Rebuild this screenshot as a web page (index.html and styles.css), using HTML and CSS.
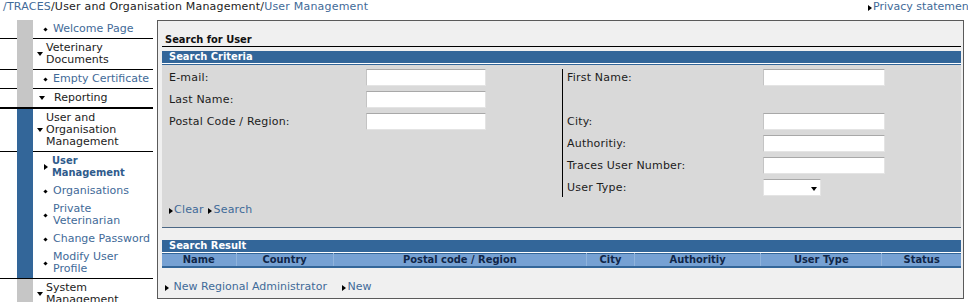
FILE: index.html
```html
<!DOCTYPE html>
<html lang="en">
<head>
<meta charset="utf-8"/>
<title>TRACES - User Management</title>
<link rel="stylesheet" href="styles.css">
</head>
<body>

<div class="topbar">
    <div class="crumbs"><a href="#">/TRACES</a>/User and Organisation Management/<a href="#">User Management</a></div>
    <div class="privacy"><span class="tri"></span><a href="#">Privacy statement</a></div>
</div>

<div class="layout">
    <!-- left navigation -->
    <nav class="menu">
        <div class="item"><span class="gut"></span><span class="bar"></span>
            <div class="cell sub"><i class="dot"></i><a href="#">Welcome Page</a></div></div>
        <div class="item"><span class="gut"></span><span class="bar"></span>
            <div class="cell"><i class="down"></i><span>Veterinary<br>Documents</span></div></div>
        <div class="item"><span class="gut"></span><span class="bar"></span>
            <div class="cell sub"><i class="dot"></i><a href="#">Empty Certificate</a></div></div>
        <div class="item last"><span class="gut"></span><span class="bar"></span>
            <div class="cell report"><i class="down"></i><span>Reporting</span></div></div>
        <div class="rule thick"></div>

        <div class="item blue"><span class="gut"></span><span class="bar"></span>
            <div class="cell"><i class="down"></i><span>User and<br>Organisation<br>Management</span></div></div>
        <div class="item blue plain"><span class="gut"></span><span class="bar"></span>
            <div class="cell sub current"><i class="tri"></i><a href="#">User<br>Management</a></div></div>
        <div class="item blue plain"><span class="gut"></span><span class="bar"></span>
            <div class="cell sub"><i class="dot"></i><a href="#">Organisations</a></div></div>
        <div class="item blue plain"><span class="gut"></span><span class="bar"></span>
            <div class="cell sub"><i class="dot"></i><a href="#">Private<br>Veterinarian</a></div></div>
        <div class="item blue plain"><span class="gut"></span><span class="bar"></span>
            <div class="cell sub"><i class="dot"></i><a href="#">Change Password</a></div></div>
        <div class="item blue plain"><span class="gut"></span><span class="bar"></span>
            <div class="cell sub"><i class="dot"></i><a href="#">Modify User<br>Profile</a></div></div>
        <div class="rule"></div>

        <div class="item plain"><span class="gut"></span><span class="bar"></span>
            <div class="cell"><i class="down"></i><span>System<br>Management</span></div></div>
    </nav>

    <main class="panel">
        <h1 class="title">Search for User</h1>

        <div class="band">Search Criteria</div>
        <div class="criteria">
            <div class="fields">
                <div class="col">
                    <div class="row"><label>E-mail:</label><input type="text"></div>
                    <div class="row"><label>Last Name:</label><input type="text"></div>
                    <div class="row"><label>Postal Code / Region:</label><input type="text"></div>
                </div>
                <div class="col right">
                    <div class="row"><label>First Name:</label><input type="text"></div>
                    <div class="row"></div>
                    <div class="row"><label>City:</label><input type="text"></div>
                    <div class="row"><label>Authoritiy:</label><input type="text"></div>
                    <div class="row"><label>Traces User Number:</label><input type="text"></div>
                    <div class="row"><label>User Type:</label><div class="select"><i class="down"></i></div></div>
                </div>
            </div>
            <div class="actions">
                <a href="#"><span class="tri"></span>Clear</a>
                <a href="#"><span class="tri"></span>Search</a>
            </div>
        </div>

        <div class="band result">Search Result</div>
        <table class="results">
            <colgroup>
                <col class="c-name"><col class="c-country"><col class="c-postal"><col class="c-city">
                <col class="c-auth"><col class="c-type"><col class="c-status">
            </colgroup>
            <thead>
                <tr>
                    <th>Name</th><th>Country</th><th>Postal code / Region</th><th>City</th>
                    <th>Authoritiy</th><th>User Type</th><th>Status</th>
                </tr>
            </thead>
        </table>

        <div class="links">
            <a href="#"><span class="tri"></span> New Regional Administrator</a>
            <a href="#" class="new"><span class="tri"></span>New</a>
        </div>
    </main>
</div>

</body>
</html>
```

FILE: styles.css
```css
body {
    margin: 0;
    width: 968px;
    overflow: hidden;
    font-family: "DejaVu Sans", Verdana, sans-serif;
    font-size: 11px;
    letter-spacing: 0.2px;
    color: #1c1c1c;
    background: #fff;
}
a {
    color: #3f6a98;
    text-decoration: none;
}
/* bold captions are narrower in the original */
.title,
.band,
.results th,
.cell.current a {
    font-family: "DejaVu Sans Condensed", "DejaVu Sans", Verdana, sans-serif;
    font-stretch: condensed;
    letter-spacing: 0;
}

/* little glyphs */
.tri {
    display: inline-block;
    width: 0;
    height: 0;
    border-left: 4px solid #000;
    border-top: 3.5px solid transparent;
    border-bottom: 3.5px solid transparent;
    margin-right: 1px;
    vertical-align: -1px;
}
.down {
    display: inline-block;
    width: 0;
    height: 0;
    border-top: 4px solid #000;
    border-left: 3.5px solid transparent;
    border-right: 3.5px solid transparent;
}
.dot {
    display: inline-block;
    width: 3px;
    height: 3px;
    background: #000;
    transform: rotate(45deg);
}

/* top line */
.topbar {
    display: flex;
    justify-content: space-between;
    height: 20px;
    line-height: 14px;
    padding-left: 3px;
}
.privacy {
    white-space: nowrap;
    letter-spacing: 0;
    margin-right: -5px;
}

.layout {
    display: flex;
    align-items: flex-start;
}

/* menu */
.menu {
    width: 153px;
    flex: none;
    letter-spacing: 0;
}
.item {
    display: flex;
}
.gut {
    width: 17px;
    flex: none;
    border-bottom: 1px solid #000;
}
.bar {
    width: 16px;
    flex: none;
    background: #c6c6c6;
}
.item.blue .bar {
    background: #336699;
}
.item.plain .gut,
.item.plain .cell,
.item.last .gut,
.item.last .cell {
    border-bottom: none;
}
.cell {
    flex: 1;
    display: flex;
    align-items: center;
    padding: 3px 0 3px 4px;
    line-height: 12px;
    border-bottom: 1px solid #000;
    color: #1c1c1c;
}
.cell .down {
    margin-right: 3px;
    flex: none;
}
.cell.report {
    padding-left: 6px;
}
.cell.report .down {
    margin-right: 9px;
}
.cell.sub {
    padding-left: 11px;
}
.cell.sub .dot {
    margin-right: 6px;
    flex: none;
}
.cell.sub .tri {
    margin-right: 4px;
    flex: none;
}
.cell.current a {
    font-weight: bold;
    color: #2f5b8c;
}
.rule {
    height: 1px;
    background: #000;
}
.rule.thick {
    height: 2px;
}

/* main panel */
.panel {
    flex: 1;
    margin: 0 4px 0 4px;
    height: 277px;
    padding: 0 2px 0 4px;
    background: #f0f0f0;
    border: 1px solid #5a5a5a;
}
.title {
    margin: 0 0 4px;
    padding: 12px 0 0 3px;
    font-size: 11px;
    line-height: 13px;
    border-bottom: 1px solid #000;
    color: #111;
}
.band {
    background: #336699;
    color: #fff;
    font-weight: bold;
    line-height: 12px;
    padding-left: 7px;
    border-bottom: 1px solid #fff;
}
.criteria {
    background: #d9d9d9;
    border-top: 1px solid #336699;
    border-bottom: 1px solid #4b6785;
    padding: 4px 0 11px;
}
.fields {
    display: flex;
}
.col {
    width: 393px;
    padding-left: 7px;
}
.col.right {
    border-left: 1px solid #000;
    padding-left: 4px;
}
.row {
    display: flex;
    height: 22px;
}
.row:last-child {
    height: 18px;
}
.col:first-child .row:last-child {
    height: 22px;
}
.row label {
    width: 197px;
    line-height: 17px;
}
.col.right .row label {
    width: 196px;
}
.row input {
    box-sizing: border-box;
    width: 120px;
    height: 17px;
    margin: 0;
    padding: 0 2px;
    background: #fff;
    border: 1px solid #e4e4e4;
    border-top-color: #a8a8a8;
    border-left-color: #c4c4c4;
}
.col.right .row input {
    width: 122px;
}
.select {
    box-sizing: border-box;
    width: 58px;
    height: 17px;
    background: #fff;
    border: 1px solid #e4e4e4;
    border-top-color: #a8a8a8;
    display: flex;
    align-items: center;
    justify-content: flex-end;
    padding: 2px 3px 0 0;
}
.actions {
    margin-top: 6px;
    padding-left: 7px;
    line-height: 13px;
}
.actions a + a {
    margin-left: 1px;
}

.band.result {
    margin-top: 12px;
}
.results {
    width: 100%;
    table-layout: fixed;
    border-collapse: collapse;
    border-top: 1px solid #336699;
    border-bottom: 2px solid #336699;
}
.results th {
    background: #76a1d3;
    color: #102648;
    font-size: 11px;
    line-height: 12px;
    height: 12px;
    padding: 0;
    border-left: 1px solid #8fb3dc;
}
.results th:first-child {
    border-left: none;
}
.c-name { width: 74px; }
.c-country { width: 97px; }
.c-postal { width: 253px; }
.c-city { width: 48px; }
.c-auth { width: 126px; }
.c-type { width: 121px; }
.c-status { width: 79px; }

.links {
    margin-top: 12px;
    padding-left: 3px;
    line-height: 13px;
    letter-spacing: 0;
}
.links .new {
    margin-left: 12px;
}
```
